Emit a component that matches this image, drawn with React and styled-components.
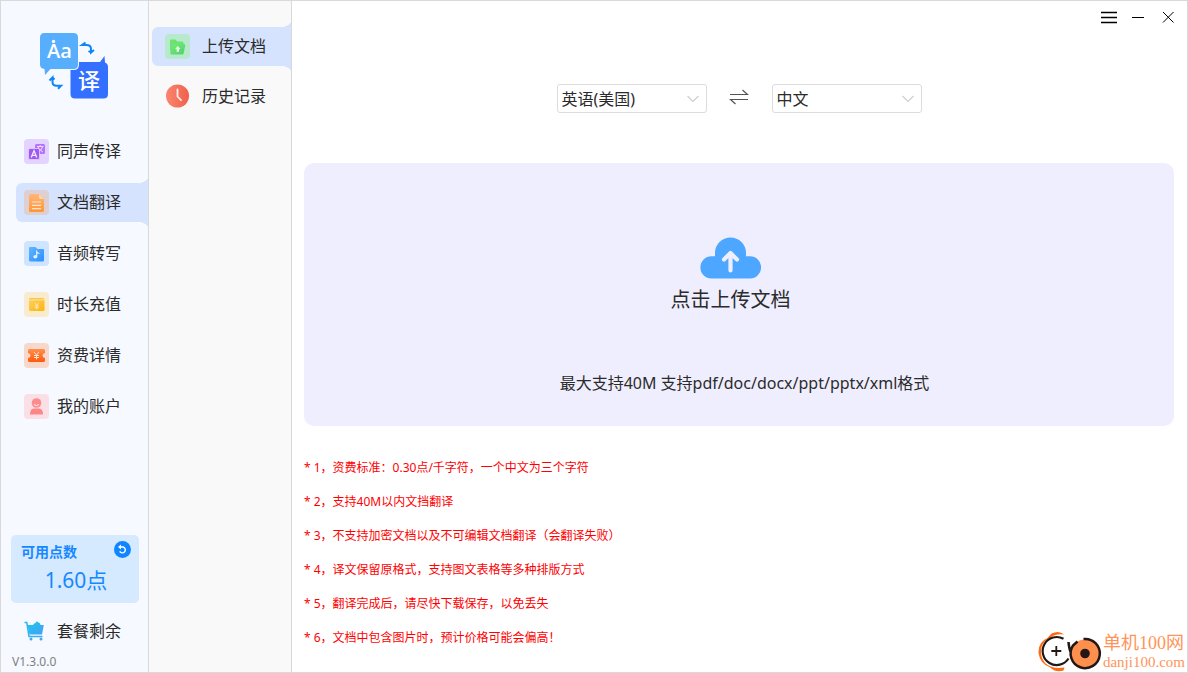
import { useState } from "react";
import styled, { createGlobalStyle, css } from "styled-components";

const menu = [
	{ name: "同声传译", icon: <VoiceIcon /> },
	{ name: "文档翻译", icon: <DocumentIcon /> },
	{ name: "音频转写", icon: <AudioIcon /> },
	{ name: "时长充值", icon: <WalletIcon /> },
	{ name: "资费详情", icon: <TicketIcon /> },
	{ name: "我的账户", icon: <AccountIcon /> },
];

const subMenu = [
	{ name: "上传文档", icon: <FolderIcon /> },
	{ name: "历史记录", icon: <HistoryIcon /> },
];

const notes = [
	"* 1，资费标准：0.30点/千字符，一个中文为三个字符",
	"* 2，支持40M以内文挡翻译",
	"* 3，不支持加密文档以及不可编辑文档翻译（会翻译失败）",
	"* 4，译文保留原格式，支持图文表格等多种排版方式",
	"* 5，翻译完成后，请尽快下载保存，以免丢失",
	"* 6，文档中包含图片时，预计价格可能会偏高！",
];

const languages = ["英语(美国)", "中文", "日语", "韩语"];

export default function App() {
	const [page, setPage] = useState("文档翻译");
	const [tab, setTab] = useState("上传文档");
	const [from, setFrom] = useState("英语(美国)");
	const [to, setTo] = useState("中文");

	function swap() {
		setFrom(to);
		setTo(from);
	}

	return (
		<>
			<GlobalStyle />
			<Window>
				<Sidebar>
					<Logo />
					<Menu>
						{menu.map((item) => (
							<MenuItem
								key={item.name}
								$active={item.name === page}
								onClick={() => setPage(item.name)}
							>
								{item.icon}
								<Label>{item.name}</Label>
							</MenuItem>
						))}
					</Menu>
					<Balance>
						<BalanceHeader>
							可用点数
							<RefreshButton aria-label="刷新">
								<RefreshIcon />
							</RefreshButton>
						</BalanceHeader>
						<Points>1.60点</Points>
					</Balance>
					<PlanButton>
						<CartIcon />
						套餐剩余
					</PlanButton>
					<Version>V1.3.0.0</Version>
				</Sidebar>

				<SubSidebar>
					{subMenu.map((item) => (
						<SubMenuItem
							key={item.name}
							$active={item.name === tab}
							onClick={() => setTab(item.name)}
						>
							{item.icon}
							<Label>{item.name}</Label>
						</SubMenuItem>
					))}
				</SubSidebar>

				<Main>
					<TitleBar>
						<WindowButton aria-label="菜单">
							<svg width="16" height="13" viewBox="0 0 16 13">
								<path d="M0 1.5h16M0 6.5h16M0 11.5h16" stroke="#000" strokeWidth="1.6" />
							</svg>
						</WindowButton>
						<WindowButton aria-label="最小化">
							<svg width="12" height="13" viewBox="0 0 12 13">
								<path d="M0 6.5h12" stroke="#000" />
							</svg>
						</WindowButton>
						<WindowButton aria-label="关闭">
							<svg width="12" height="13" viewBox="0 0 12 13">
								<path d="M1 1l10.500 10.500M11.500 1L1 11.500" stroke="#000" />
							</svg>
						</WindowButton>
					</TitleBar>

					<Languages>
						<LanguageSelect label="源语言" value={from} onChange={setFrom} />
						<SwapButton aria-label="交换语言" onClick={swap}>
							<svg width="20" height="16" viewBox="0 0 20 16" fill="none" stroke="#555" strokeWidth="1.2">
								<path d="M1 5.5h17.500L13.500 1M19 10.500H1.500L6.500 15" />
							</svg>
						</SwapButton>
						<LanguageSelect label="目标语言" value={to} onChange={setTo} />
					</Languages>

					<UploadPanel>
						<UploadButton>
							<CloudIcon />
							点击上传文档
						</UploadButton>
						<Hint>最大支持40M 支持pdf/doc/docx/ppt/pptx/xml格式</Hint>
					</UploadPanel>

					<Notes>
						{notes.map((note) => (
							<li key={note}>{note}</li>
						))}
					</Notes>
				</Main>

				<Watermark>
					<WatermarkLogo />
					<div>
						<SiteName>单机100网</SiteName>
						<SiteUrl>danji100.com</SiteUrl>
					</div>
				</Watermark>
			</Window>
		</>
	);
}

function LanguageSelect({ label, value, onChange }) {
	return (
		<SelectBox>
			<select aria-label={label} value={value} onChange={(e) => onChange(e.target.value)}>
				{languages.map((language) => (
					<option key={language}>{language}</option>
				))}
			</select>
			<svg width="12" height="8" viewBox="0 0 12 8" fill="none" stroke="#cfcfcf" strokeWidth="1.2">
				<path d="M.5 1L6 6.500 11.500 1" />
			</svg>
		</SelectBox>
	);
}

function Logo() {
	return (
		<LogoSvg width="70" height="68" viewBox="0 0 70 68" role="img" aria-label="翻译">
			<path d="M36 29h25l4.500-6 .500 6.500q3 1 3 4.500v27q0 4.500-4.500 4.500H36q-4.500 0-4.500-4.500V33.500q0-4.500 4.500-4.500z" fill="#3370ff" />
			<path
				d="M5.500-1h29Q40-1 40 4.500v27q0 5.500-5.500 5.500H12l-6.500 6.500L5 37Q0 36 0 31.500v-27Q0-1 5.500-1z"
				fill="#f6f9ff"
			/>
			<path d="M5.500 0h29Q39 0 39 4.500v27q0 4.500-4.500 4.500H11.500L6 42l-.500-6Q1 35.500 1 31.500v-27Q1 0 5.500 0z" fill="#57aefc" />
			<circle cx="14.500" cy="8.500" r="1.700" fill="#fff" />
			<text x="8" y="25" fontSize="20" fill="#fff" fontFamily="'Open Sans'" fontWeight="600">Aa</text>
			<text x="39" y="56" fontSize="22" fill="#fff" fontFamily="'Noto Sans CJK SC'" fontWeight="500">译</text>
			<g fill="none" stroke="#0c86f8" strokeWidth="2">
				<path d="M46.500 9.500L43 12h4.500q4.500 0 4.500 4v3.500l3-2.500M52 19.500L49.500 18" />
				<path d="M10.500 47.500l3-3v4.500q0 3.800 4 3.800H22l-3 3M13.500 44.500l2 2" />
			</g>
		</LogoSvg>
	);
}

function VoiceIcon() {
	return (
		<svg width="25" height="25" viewBox="0 0 25 25">
			<rect width="25" height="25" rx="4" fill="#e2d3ff" />
			<rect x="11" y="5" width="10" height="10" rx="1.500" fill="#b573fa" />
			<path d="M13 7.500h6.500M16.200 6v1.500M18.500 8q-1 3.500-4.500 5M14 8q1.500 3.500 5 5" stroke="#ead9ff" strokeWidth="1" fill="none" />
			<rect x="4.500" y="9.500" width="11" height="11" rx="1.500" fill="#9f58f5" stroke="#e2d3ff" strokeWidth=".8" />
			<path d="M7.200 18.500L10 11.800l2.800 6.700M8.200 16.300h3.600" stroke="#f3eaff" strokeWidth="1.300" fill="none" />
		</svg>
	);
}

function DocumentIcon() {
	return (
		<svg width="25" height="25" viewBox="0 0 25 25">
			<defs>
				<linearGradient id="doc" x1="0" y1="0" x2="0" y2="1">
					<stop offset="0" stopColor="#ffb57c" />
					<stop offset="1" stopColor="#ff9638" />
				</linearGradient>
			</defs>
			<rect width="25" height="25" rx="4" fill="#decfd0" />
			<path d="M6.500 4H15l5 5v11.500q0 1.500-1.500 1.500h-12Q5 22 5 20.500v-15Q5 4 6.500 4z" fill="url(#doc)" />
			<path d="M15 4l5 5h-3.500Q15 9 15 7.500z" fill="#ffd4ad" />
			<path d="M8 12h9M8 15.300h9M8 18.600h9" stroke="#ffe5cd" strokeWidth="1.200" />
		</svg>
	);
}

function AudioIcon() {
	return (
		<svg width="25" height="25" viewBox="0 0 25 25">
			<defs>
				<linearGradient id="audio" x1="0" y1="0" x2="1" y2="1">
					<stop offset="0" stopColor="#62b4ff" />
					<stop offset="1" stopColor="#2b90ff" />
				</linearGradient>
			</defs>
			<rect width="25" height="25" rx="4" fill="#cfe4ff" />
			<path d="M6 6h5.500l2 2H19q1 0 1 1v10q0 1.500-1.500 1.500h-12Q5 20.500 5 19V7q0-1 1-1z" fill="url(#audio)" />
			<ellipse cx="11.300" cy="15.800" rx="2" ry="1.700" fill="#e4f2ff" />
			<path d="M12.700 15.800v-5q1 1.700 2.800 1.700" stroke="#e4f2ff" strokeWidth="1.200" fill="none" />
		</svg>
	);
}

function WalletIcon() {
	return (
		<svg width="25" height="25" viewBox="0 0 25 25">
			<defs>
				<linearGradient id="wallet" x1="0" y1="0" x2="1" y2="1">
					<stop offset="0" stopColor="#fdd061" />
					<stop offset="1" stopColor="#ffb309" />
				</linearGradient>
			</defs>
			<rect width="25" height="25" rx="4" fill="#f9ebcd" />
			<path d="M6 6h13q1.500 0 1.500 1.500H5Q5 6 6 6z" fill="#fcc544" />
			<path d="M5 8.200h15.500v9.300q0 1.500-1.500 1.500H6.500Q5 19 5 17.500z" fill="url(#wallet)" />
			<path d="M10.800 10.800l2 2.700 2-2.700M12.800 13.500v4M10.700 14h4.200M10.700 15.700h4.200" stroke="#fff1cd" strokeWidth=".8" fill="none" />
		</svg>
	);
}

function TicketIcon() {
	return (
		<svg width="25" height="25" viewBox="0 0 25 25">
			<defs>
				<linearGradient id="ticket" x1="0" y1="0" x2="0" y2="1">
					<stop offset="0" stopColor="#ff8f4e" />
					<stop offset="1" stopColor="#ff5b0c" />
				</linearGradient>
			</defs>
			<rect width="25" height="25" rx="4" fill="#f9d8cc" />
			<path d="M5.500 6h14q1.500 0 1.500 1.500V10q-2.500.5-2.500 2.500t2.500 2.500v2.500q0 1.500-1.500 1.500h-14Q4 19 4 17.500V15q2.500-.5 2.500-2.500T4 10V7.500Q4 6 5.500 6z" fill="url(#ticket)" />
			<path d="M10 9l2.500 3L15 9M12.500 12v4.500M10 12.500h5M10 14.500h5" stroke="#ffe1d1" strokeWidth="1" fill="none" />
		</svg>
	);
}

function AccountIcon() {
	return (
		<svg width="25" height="25" viewBox="0 0 25 25">
			<rect width="25" height="25" rx="4" fill="#fae0e6" />
			<circle cx="12.500" cy="9" r="4.800" fill="#fd8c8f" />
			<path d="M10.200 10.300q2.300 2.400 4.600 0" stroke="#ffe3e3" strokeWidth="1.200" fill="none" />
			<path d="M6 20.500q0-6 4-6h5q4 0 4 6z" fill="#ff8589" />
		</svg>
	);
}

function FolderIcon() {
	return (
		<svg width="25" height="25" viewBox="0 0 25 25">
			<defs>
				<linearGradient id="folder" x1="0" y1="0" x2="1" y2="1">
					<stop offset="0" stopColor="#74eb78" />
					<stop offset="1" stopColor="#55cf6d" />
				</linearGradient>
			</defs>
			<rect width="25" height="25" rx="4" fill="#b7e9cd" />
			<path d="M6 5.500h4.500l1.800 2H17q1.500 0 1.500 1.500v2H9L5 18V6.500q0-1 1-1z" fill="#6be370" />
			<path d="M8.500 10H19q1.500 0 1.200 1.500l-1.500 7.500q-.3 1.500-1.700 1.500H6.500Q5 20.500 5.300 19L7 11.500Q7.200 10 8.500 10z" fill="url(#folder)" />
			<path d="M12.800 12l2.700 3h-1.500v2.800h-2.400V15h-1.500z" fill="#dcffe2" />
		</svg>
	);
}

function HistoryIcon() {
	return (
		<svg width="25" height="25" viewBox="0 0 25 25">
			<defs>
				<linearGradient id="history" x1="0" y1="0" x2="1" y2="0">
					<stop offset="0" stopColor="#fb8570" />
					<stop offset="1" stopColor="#f0614b" />
				</linearGradient>
			</defs>
			<circle cx="12.500" cy="12" r="11.500" fill="url(#history)" />
			<path d="M12.500 5.500v7l3.500 3.700" stroke="#fff0ec" strokeWidth="1.800" strokeLinecap="round" fill="none" />
		</svg>
	);
}

function RefreshIcon() {
	return (
		<svg width="17" height="17" viewBox="0 0 17 17">
			<circle cx="8.500" cy="8.500" r="8.500" fill="#0f86ff" />
			<path d="M5.500 6h3.700a3 3 0 1 1-3.500 4.300" stroke="#fff" strokeWidth="1.400" fill="none" />
			<path d="M7 3.500L4 6l3 2.500z" fill="#fff" />
		</svg>
	);
}

function CartIcon() {
	return (
		<svg width="25" height="22" viewBox="0 0 25 22">
			<defs>
				<linearGradient id="cart" x1="0" y1="0" x2="1" y2="1">
					<stop offset="0" stopColor="#16cbe9" />
					<stop offset="1" stopColor="#4b9cf8" />
				</linearGradient>
			</defs>
			<path d="M3.500 5H9q1-2 2.500-2 1-2.500 3-.500 2 0 2 2.500h3.300L18 14.500H5.500z" fill="url(#cart)" />
			<path d="M.5 2.500h2.300L5 16.500h13.500" stroke="#32b4f0" strokeWidth="1.600" fill="none" />
			<circle cx="7" cy="19" r="1.500" fill="#4ba3f6" />
			<circle cx="17" cy="19" r="1.500" fill="#4ba3f6" />
		</svg>
	);
}

function CloudIcon() {
	return (
		<svg width="61" height="42" viewBox="0 0 61 42">
			<path d="M15 19.300V16a15.500 15.500 0 0 1 31 0v3.300h4A11 11 0 0 1 50 41.500H11.500a11 11 0 0 1 0-22.200z" fill="#4da6ff" />
			<path d="M30.500 33.500v-17M24 22.500l6.500-6.500 6.500 6.500" stroke="#efeefe" strokeWidth="4.200" strokeLinecap="round" strokeLinejoin="round" fill="none" />
		</svg>
	);
}

function WatermarkLogo() {
	return (
		<svg width="64" height="42" viewBox="0 0 64 42" fill="none">
			<path d="M26 4.500Q21 0 13.500 3.500L9.500 8Q0 12 .5 23q1.500 10.500 11 14 6 6 14 3.500l1-3Q14 39.500 7 33 1.500 26 3.500 17 6 10 12 8q5-4.500 14-3.500z" fill="#ff6b12" />
			<path d="M25.500 8.800A14 14 0 1 0 30.500 28.500" stroke="#231815" strokeWidth="2.200" />
			<path d="M18.300 16v10M13.300 21h10" stroke="#231815" strokeWidth="1.800" />
			<circle cx="47" cy="23.500" r="14" fill="#ff8f4c" />
			<path d="M45.500 9A14.600 14.600 0 1 1 35 15.500M30.500 12q.5 7 2.500 11M39.500 11.500L34.500 16" stroke="#231815" strokeWidth="2.500" />
			<circle cx="47" cy="23.500" r="4.800" fill="#231815" />
		</svg>
	);
}

const GlobalStyle = createGlobalStyle`
	* {
		box-sizing: border-box;
	}
	body {
		margin: 0;
		color: #2b2b2b;
		font-family: "Noto Sans", "Noto Sans CJK SC", sans-serif;
		font-size: 16px;
	}
	button, select {
		font: inherit;
		color: inherit;
		border: none;
		background: none;
		padding: 0;
		cursor: pointer;
	}
	svg {
		display: block;
		flex-shrink: 0;
	}
`;

const Window = styled.div`
	position: relative;
	display: flex;
	min-height: 100vh;
	border: 1px solid #d9d9d9;
	background: #fff;
`;

const Sidebar = styled.aside`
	display: flex;
	flex-direction: column;
	width: 148px;
	flex-shrink: 0;
	padding-top: 32px;
	background: #f6f9ff;
	border-right: 1px solid #d9d9d9;
`;

const LogoSvg = styled.svg`
	margin-left: 38px;
`;

const Menu = styled.nav`
	display: flex;
	flex-direction: column;
	gap: 12px;
	margin-top: 31px;
	padding-left: 15px;
`;

// the selected entry flares out into the right border
const active = css`
	background: #d6e3ff;
	&::before,
	&::after {
		content: "";
		position: absolute;
		right: 0;
		width: 10px;
		height: 6px;
	}
	&::before {
		bottom: 100%;
		background: radial-gradient(ellipse 10px 6px at 0 0, transparent 98%, #d6e3ff);
	}
	&::after {
		top: 100%;
		background: radial-gradient(ellipse 10px 6px at 0 100%, transparent 98%, #d6e3ff);
	}
`;

const MenuItem = styled.button`
	position: relative;
	display: flex;
	align-items: center;
	gap: 8px;
	height: 39px;
	padding-left: 8px;
	border-radius: 6px 0 0 6px;
	line-height: 24px;
	${({ $active }) => $active && active}
`;

const Label = styled.span`
	padding-bottom: 2px;
`;

const Balance = styled.section`
	height: 68px;
	margin: auto 9px 0 10px;
	padding: 6px 8px 0 10px;
	border-radius: 5px;
	background: #d5e9ff;
	color: #1688ff;
`;

const BalanceHeader = styled.div`
	display: flex;
	align-items: flex-start;
	justify-content: space-between;
	font-size: 14px;
	font-weight: 700;
	line-height: 22px;
`;

const RefreshButton = styled.button`
	height: 17px;
`;

const Points = styled.div`
	font-size: 21px;
	line-height: 34px;
	text-align: center;
`;

const PlanButton = styled.button`
	display: flex;
	align-items: center;
	gap: 8px;
	margin-top: 16px;
	padding-left: 23px;
	line-height: 24px;
`;

const Version = styled.div`
	padding: 11px 0 2px 11px;
	font-size: 12px;
	line-height: 16px;
	color: #808080;
`;

const SubSidebar = styled.nav`
	display: flex;
	flex-direction: column;
	gap: 11px;
	width: 143px;
	flex-shrink: 0;
	padding: 26px 0 0 3px;
	background: #f9f9f9;
	border-right: 1px solid #d9d9d9;
`;

const SubMenuItem = styled(MenuItem)`
	gap: 12px;
	padding-left: 13px;
`;

const Main = styled.main`
	flex: 1;
	min-width: 0;
	padding: 0 13px 0 12px;
`;

const TitleBar = styled.header`
	display: flex;
	justify-content: flex-end;
	gap: 15px;
	height: 32px;
`;

const WindowButton = styled.button`
	display: flex;
	align-items: center;
	height: 32px;
	&:last-child {
		margin-left: 3px;
	}
`;

const Languages = styled.div`
	display: flex;
	justify-content: center;
	gap: 22px;
	margin-top: 51px;
`;

const SelectBox = styled.div`
	display: grid;
	align-items: center;
	width: 150px;
	height: 29px;
	select {
		grid-area: 1 / 1;
		width: 100%;
		height: 29px;
		padding-left: 4px;
		border: 1px solid #dcdcdc;
		border-radius: 3px;
		background: #fff;
		appearance: none;
	}
	svg {
		grid-area: 1 / 1;
		justify-self: end;
		margin-right: 8px;
		pointer-events: none;
	}
`;

const SwapButton = styled.button`
	width: 21px;
	height: 26px;
`;

const UploadPanel = styled.section`
	display: flex;
	flex-direction: column;
	align-items: center;
	margin-top: 50px;
	padding: 74px 0 31px;
	border-radius: 10px;
	background: #efeefe;
`;

const UploadButton = styled.button`
	display: flex;
	flex-direction: column;
	align-items: center;
	gap: 6px;
	margin-right: 17px;
	font-size: 20px;
	line-height: 30px;
`;

const Hint = styled.p`
	margin: 56px 0 0 11px;
	line-height: 24px;
`;

const Notes = styled.ul`
	display: flex;
	flex-direction: column;
	gap: 14px;
	margin: 32px 0 0;
	padding: 0;
	list-style: none;
	font-size: 12px;
	line-height: 20px;
	color: #f00;
`;

const Watermark = styled.div`
	position: absolute;
	right: 2px;
	bottom: 0;
	display: flex;
	align-items: center;
	gap: 1px;
	color: #ff9459;
	font-family: "Liberation Serif", "Noto Sans CJK SC", serif;
	white-space: nowrap;
`;

const SiteName = styled.div`
	padding-top: 2px;
	font-size: 18px;
	line-height: 20px;
`;

const SiteUrl = styled.div`
	font-size: 15px;
	line-height: 18px;
`;
